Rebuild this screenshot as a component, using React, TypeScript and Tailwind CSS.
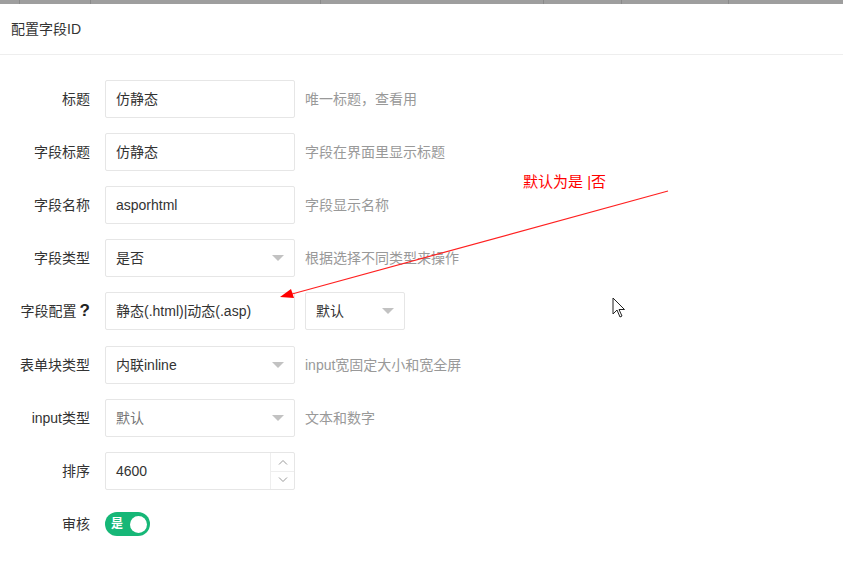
import React from "react";

const font = { fontFamily: '"Liberation Sans", "Noto Sans CJK SC", sans-serif' };

function Caret() {
  return (
    <span className="w-0 h-0 border-l-[6px] border-r-[6px] border-t-[6px] border-l-transparent border-r-transparent border-t-[#c2c2c2]" />
  );
}

function Row({ label, children, tip, gap = "mb-[15px]" }: { label: React.ReactNode; children: React.ReactNode; tip?: string; gap?: string }) {
  return (
    <div className={`flex items-center h-[38px] ${gap}`}>
      <div className="w-[90px] pr-0 text-right text-[14px] text-[#333] whitespace-nowrap">{label}</div>
      <div className="ml-[15px] flex items-center">{children}</div>
      {tip && <div className="ml-[10px] text-[14px] text-[#999]">{tip}</div>}
    </div>
  );
}

function TextBox({ value }: { value: string }) {
  return (
    <div className="w-[190px] h-[38px] border border-[#e6e6e6] rounded-[2px] flex items-center px-[10px] text-[14px] text-[#333]">
      {value}
    </div>
  );
}

function SelectBox({ value, width = "w-[190px]", muted }: { value: string; width?: string; muted?: boolean }) {
  return (
    <div className={`${width} h-[38px] border border-[#e6e6e6] rounded-[2px] flex items-center justify-between pl-[10px] pr-[10px] text-[14px] ${muted ? "text-[#757575]" : "text-[#333]"}`}>
      <span>{value}</span>
      <Caret />
    </div>
  );
}

export default function App() {
  return (
    <div className="relative w-[843px] h-[567px] bg-white overflow-hidden" style={font}>
      <div className="h-[4px] bg-[#9e9e9e] flex">
        <div className="w-[20px] border-r border-[#8a8a8a]" />
        <div className="w-[71px] border-r border-[#8a8a8a]" />
        <div className="w-[230px] border-r border-[#8a8a8a]" />
        <div className="w-[223px] border-r border-[#8a8a8a]" />
        <div className="w-[78px] border-r border-[#8a8a8a]" />
        <div className="w-[107px] border-r border-[#8a8a8a]" />
      </div>
      <div className="h-[51px] border-b border-[#eeeeee] flex items-center px-[11px] text-[14px] text-[#333]">
        配置字段ID
      </div>
      <div className="pt-[25px]">
        <Row label="标题" tip="唯一标题，查看用">
          <TextBox value="仿静态" />
        </Row>
        <Row label="字段标题" tip="字段在界面里显示标题">
          <TextBox value="仿静态" />
        </Row>
        <Row label="字段名称" tip="字段显示名称">
          <TextBox value="asporhtml" />
        </Row>
        <Row label="字段类型" tip="根据选择不同类型来操作">
          <SelectBox value="是否" />
        </Row>
        <Row
          gap="mb-[16px]"
          label={
            <span>
              字段配置<span className="font-bold text-[17px] text-[#222] ml-[3px]">?</span>
            </span>
          }
        >
          <TextBox value="静态(.html)|动态(.asp)" />
          <div className="ml-[10px]">
            <SelectBox value="默认" width="w-[100px]" />
          </div>
        </Row>
        <Row label="表单块类型" tip="input宽固定大小和宽全屏">
          <SelectBox value="内联inline" />
        </Row>
        <Row label="input类型" tip="文本和数字">
          <SelectBox value="默认" muted />
        </Row>
        <Row label="排序">
          <div className="w-[190px] h-[38px] border border-[#e6e6e6] rounded-[2px] flex text-[14px] text-[#333]">
            <div className="flex-1 flex items-center px-[10px]">4600</div>
            <div className="w-[24px] border-l border-[#eee] flex flex-col">
              <div className="flex-1 border-b border-[#eee] flex items-center justify-center">
                <svg width="10" height="6" viewBox="0 0 10 6" fill="none" stroke="#999" strokeWidth="1">
                  <path d="M1 5.5 L5 1.5 L9 5.5" />
                </svg>
              </div>
              <div className="flex-1 flex items-center justify-center">
                <svg width="10" height="6" viewBox="0 0 10 6" fill="none" stroke="#999" strokeWidth="1">
                  <path d="M1 0.5 L5 4.5 L9 0.5" />
                </svg>
              </div>
            </div>
          </div>
        </Row>
        <Row label="审核">
          <div className="w-[45px] h-[24px] rounded-full bg-[#16b777] flex items-center justify-between pl-[6px] pr-[3px]">
            <span className="text-white text-[12px] font-bold leading-none">是</span>
            <span className="w-[17px] h-[17px] rounded-full bg-white" />
          </div>
        </Row>
      </div>

      <div className="absolute left-[523px] top-[174px] text-[15px] text-[#ff0000] leading-none whitespace-pre">默认为是 |否</div>
      <svg className="absolute left-0 top-0 pointer-events-none" width="843" height="567">
        <line x1="668" y1="191" x2="292" y2="294" stroke="#ff2020" strokeWidth="1.2" />
        <polygon points="280,297 291,289 294,298" fill="#ff0000" />
      </svg>
      <svg className="absolute left-[612px] top-[297px]" width="14" height="22" viewBox="0 0 14 22">
        <path d="M1 1 L1 17 L5 13 L8 20 L10 19 L7 12.5 L12.5 12.5 Z" fill="#fff" stroke="#222" strokeWidth="1" strokeLinejoin="miter" />
      </svg>
    </div>
  );
}
